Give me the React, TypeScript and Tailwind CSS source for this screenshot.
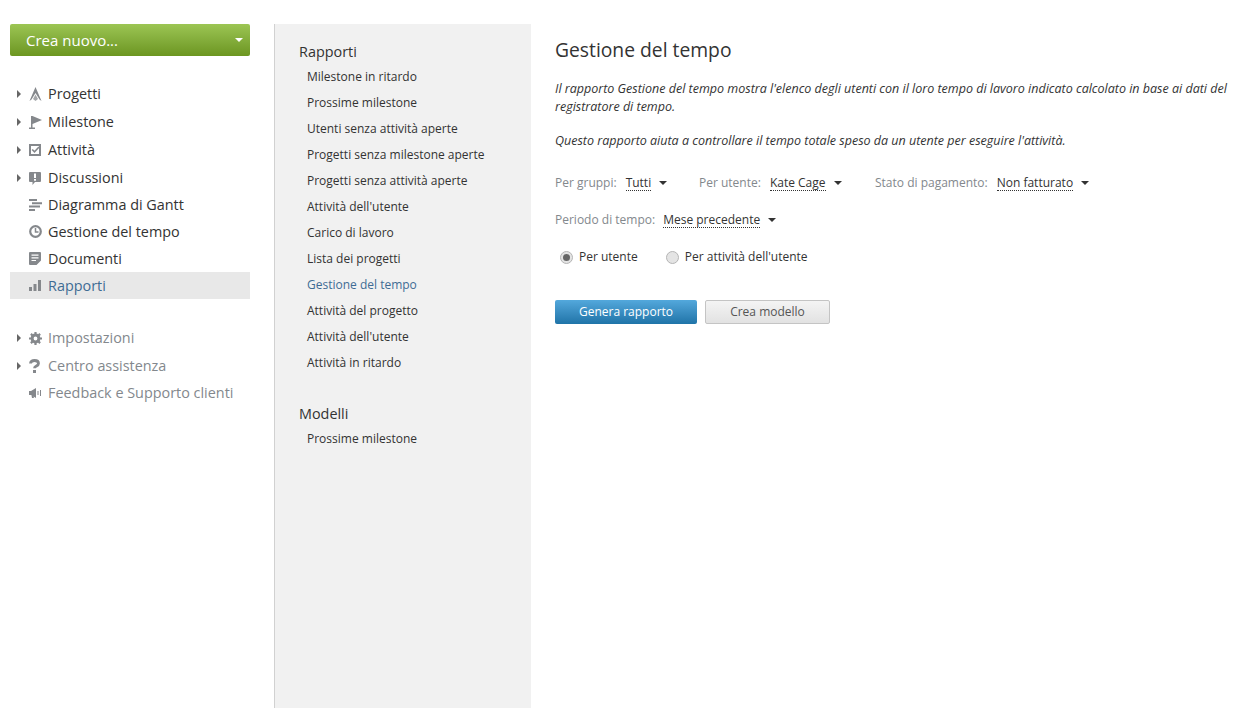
import type { ReactNode } from 'react';

const I = {
  progetti: (
    <svg width="13" height="14" viewBox="0 0 13 14" fill="#85888c">
      <path d="M6.500 0 8 3.500l4.500 10.500-2-1.500L6.500 6l-4 6.500-2 1.500L5 3.500z" />
      <path d="M6.500 7.500 9 12l-2.500 2L4 12z" fill="#a6a8ab" />
    </svg>
  ),
  milestone: (
    <svg width="13" height="14" viewBox="0 0 13 14" fill="#85888c">
      <path d="M2 1h1.500L13 5 3.500 9v3.500H6V14H0v-1.500h2z" />
    </svg>
  ),
  attivita: (
    <svg width="12" height="12" viewBox="0 0 12 12" fill="none">
      <path d="M1 1h10v10H1z" stroke="#85888c" strokeWidth="2" />
      <path d="m3.200 5.500 2.300 2.300L10 3" stroke="#85888c" strokeWidth="1.600" />
    </svg>
  ),
  discussioni: (
    <svg width="12" height="13" viewBox="0 0 12 13" fill="#85888c">
      <path fillRule="evenodd" d="M1 0h10a1 1 0 0 1 1 1v8a1 1 0 0 1-1 1H6l-2.500 3v-3H1a1 1 0 0 1-1-1V1a1 1 0 0 1 1-1zm4 1.500V6h2V1.500zm0 5.500v1.800h2V7z" />
    </svg>
  ),
  gantt: (
    <svg width="13" height="12" viewBox="0 0 13 12" fill="#85888c">
      <path d="M0 0h8v2H0zM3 3.300h10v2H3zM0 6.600h11v2H0zM0 10h6v2H0z" />
    </svg>
  ),
  tempo: (
    <svg width="13" height="13" viewBox="0 0 13 13" fill="none">
      <circle cx="6.500" cy="6.500" r="5.300" stroke="#85888c" strokeWidth="2.200" />
      <path d="M6.500 3v4h3" stroke="#85888c" strokeWidth="1.500" />
    </svg>
  ),
  documenti: (
    <svg width="12" height="13" viewBox="0 0 12 13" fill="#85888c">
      <path fillRule="evenodd" d="M1 0h10a1 1 0 0 1 1 1v7.500L7.500 13H1a1 1 0 0 1-1-1V1a1 1 0 0 1 1-1zm1.500 2.500v1.200h7V2.500zm0 2.700v1.200h7V5.200zm0 2.700v1.200h4.500V7.900z" />
    </svg>
  ),
  rapporti: (
    <svg width="12" height="11" viewBox="0 0 12 11" fill="#85888c">
      <path d="M0 7h3v4H0zM4.500 4h3v7h-3zM9 0h3v11H9z" />
    </svg>
  ),
  impostazioni: (
    <svg width="13" height="13" viewBox="0 0 13 13" fill="none">
      <circle cx="6.500" cy="6.500" r="3.400" stroke="#85888c" strokeWidth="3" />
      <path d="M6.500 0v3M6.500 10v3M0 6.500h3M10 6.500h3M1.900 1.900l2.100 2.100M9 9l2.100 2.100M1.900 11.100 4 9M9 4l2.100-2.100" stroke="#85888c" strokeWidth="2.200" />
    </svg>
  ),
  assistenza: (
    <svg width="11" height="14" viewBox="0 0 11 14" fill="none">
      <path d="M1.500 4.500c0-2 1.700-3 4-3s4 1 4 3c0 2.700-4 2.200-4 4.700" stroke="#85888c" strokeWidth="2.800" />
      <path d="M4 11h3v3H4z" fill="#85888c" />
    </svg>
  ),
  feedback: (
    <svg width="12" height="10" viewBox="0 0 12 10" fill="#85888c">
      <path d="M0 3h2L7 0v10L4.500 8.500 5 10H3l-.6-3H0zM8.500 3h1v4h-1zM11 2h1v6h-1z" />
    </svg>
  ),
};

function NavRow({ icon, label, arrow, muted, active, h }: { icon: ReactNode; label: string; arrow?: boolean; muted?: boolean; active?: boolean; h: string }) {
  let color = 'text-[#333333]';
  if (muted) color = 'text-[#83888d]';
  if (active) color = 'text-[#3f6c94]';
  return (
    <div className={`flex items-center ${h} ${active ? 'bg-[#e8e8e8]' : ''}`}>
      <div className="w-[18px] flex justify-center">
        {arrow && <div className="w-0 h-0 border-y-[4px] border-y-transparent border-l-[4px] border-l-[#666666]" />}
      </div>
      <div className="w-5 pl-[1px] flex items-center">{icon}</div>
      <span className={`text-[14.4px] ${color}`}>{label}</span>
    </div>
  );
}

function SideLink({ label, active }: { label: string; active?: boolean }) {
  return (
    <div className={`h-[26px] flex items-center pl-2 text-[12px] ${active ? 'text-[#3f6c94]' : 'text-[#333333]'}`}>
      {label}
    </div>
  );
}

function Filter({ label, value, className, gap }: { label: string; value: string; className: string; gap: string }) {
  return (
    <div className={`flex items-center ${className}`}>
      <span className="text-[#83888d]">{label}</span>
      <span className={`${gap} border-b border-dotted border-[#333333] leading-[15px] text-[#333333]`}>{value}</span>
      <div className="ml-[8px] w-0 h-0 border-x-[4px] border-x-transparent border-t-[4px] border-t-[#333333]" />
    </div>
  );
}

export default function App() {
  return (
    <div className="w-[1240px] h-[708px] overflow-hidden bg-white flex font-['Open_Sans',sans-serif] text-[12px]">
      <aside className="w-[274px] pt-6 pl-[10px] pr-6 shrink-0">
        <div className="h-8 rounded-[2px] bg-gradient-to-b from-[#9cc553] to-[#6c9620] flex items-center justify-between pl-4 pr-[7px] text-[15px] text-white">
          <span>Crea nuovo...</span>
          <div className="w-0 h-0 border-x-[4px] border-x-transparent border-t-[4px] border-t-white" />
        </div>
        <div className="mt-[24px]">
          <NavRow h="h-[28px]" arrow icon={I.progetti} label="Progetti" />
          <NavRow h="h-[28px]" arrow icon={I.milestone} label="Milestone" />
          <NavRow h="h-[28px]" arrow icon={I.attivita} label="Attività" />
          <NavRow h="h-[28px]" arrow icon={I.discussioni} label="Discussioni" />
          <NavRow h="h-[26px]" icon={I.gantt} label="Diagramma di Gantt" />
          <NavRow h="h-[27px]" icon={I.tempo} label="Gestione del tempo" />
          <NavRow h="h-[27px]" icon={I.documenti} label="Documenti" />
          <NavRow h="h-[27px]" active icon={I.rapporti} label="Rapporti" />
        </div>
        <div className="mt-[25px]">
          <NavRow h="h-[28px]" arrow muted icon={I.impostazioni} label="Impostazioni" />
          <NavRow h="h-[28px]" arrow muted icon={I.assistenza} label="Centro assistenza" />
          <NavRow h="h-[26px]" muted icon={I.feedback} label="Feedback e Supporto clienti" />
        </div>
      </aside>

      <nav className="mt-6 w-[257px] shrink-0 bg-[#f1f1f1] border-l border-[#d1d1d1] pl-6 pt-[18px]">
        <div className="text-[14.4px] leading-[20px] text-[#333333] mb-[2px]">Rapporti</div>
        <SideLink label="Milestone in ritardo" />
        <SideLink label="Prossime milestone" />
        <SideLink label="Utenti senza attività aperte" />
        <SideLink label="Progetti senza milestone aperte" />
        <SideLink label="Progetti senza attività aperte" />
        <SideLink label="Attività dell'utente" />
        <SideLink label="Carico di lavoro" />
        <SideLink label="Lista dei progetti" />
        <SideLink active label="Gestione del tempo" />
        <SideLink label="Attività del progetto" />
        <SideLink label="Attività dell'utente" />
        <SideLink label="Attività in ritardo" />
        <div className="mt-[28px] text-[14.4px] leading-[20px] text-[#333333] mb-[2px]">Modelli</div>
        <SideLink label="Prossime milestone" />
      </nav>

      <main className="flex-1 pl-6 pt-[37px]">
        <h1 className="text-[19.3px] leading-[25px] text-[#333333]">Gestione del tempo</h1>
        <p className="mt-[18px] italic text-[12.5px] leading-[18px] text-[#333333]">
          Il rapporto Gestione del tempo mostra l'elenco degli utenti con il loro tempo di lavoro indicato calcolato in base ai dati del registratore di tempo.
        </p>
        <p className="mt-[16px] italic text-[12.5px] leading-[18px] text-[#333333]">
          Questo rapporto aiuta a controllare il tempo totale speso da un utente per eseguire l'attività.
        </p>
        <div className="mt-[25px] flex h-4 items-center">
          <Filter className="w-[144px]" gap="ml-[9px]" label="Per gruppi:" value="Tutti" />
          <Filter className="w-[176px]" gap="ml-[9px]" label="Per utente:" value="Kate Cage" />
          <Filter className="" gap="ml-[9px]" label="Stato di pagamento:" value="Non fatturato" />
        </div>
        <div className="mt-[21px] flex h-4 items-center">
          <Filter className="" gap="ml-[8px]" label="Periodo di tempo:" value="Mese precedente" />
        </div>
        <div className="mt-[21px] flex h-[16px] items-center pl-[5px] text-[#333333]">
          <div className="w-[13px] h-[13px] rounded-full border border-[#b5b5b5] bg-[#e4e4e4] flex items-center justify-center">
            <div className="w-[7px] h-[7px] rounded-full bg-[#666666]" />
          </div>
          <span className="ml-[6px]">Per utente</span>
          <div className="ml-[28px] w-[13px] h-[13px] rounded-full border border-[#b5b5b5] bg-[#e4e4e4]" />
          <span className="ml-[6px]">Per attività dell'utente</span>
        </div>
        <div className="mt-[35px] flex gap-2">
          <div className="w-[142px] h-6 rounded-[2px] bg-gradient-to-b from-[#53a8dc] to-[#1f74a8] flex items-center justify-center text-white">
            Genera rapporto
          </div>
          <div className="w-[125px] h-6 rounded-[2px] border border-[#c4c4c4] bg-gradient-to-b from-[#f4f4f4] to-[#e2e2e2] flex items-center justify-center text-[#555555]">
            Crea modello
          </div>
        </div>
      </main>
    </div>
  );
}
